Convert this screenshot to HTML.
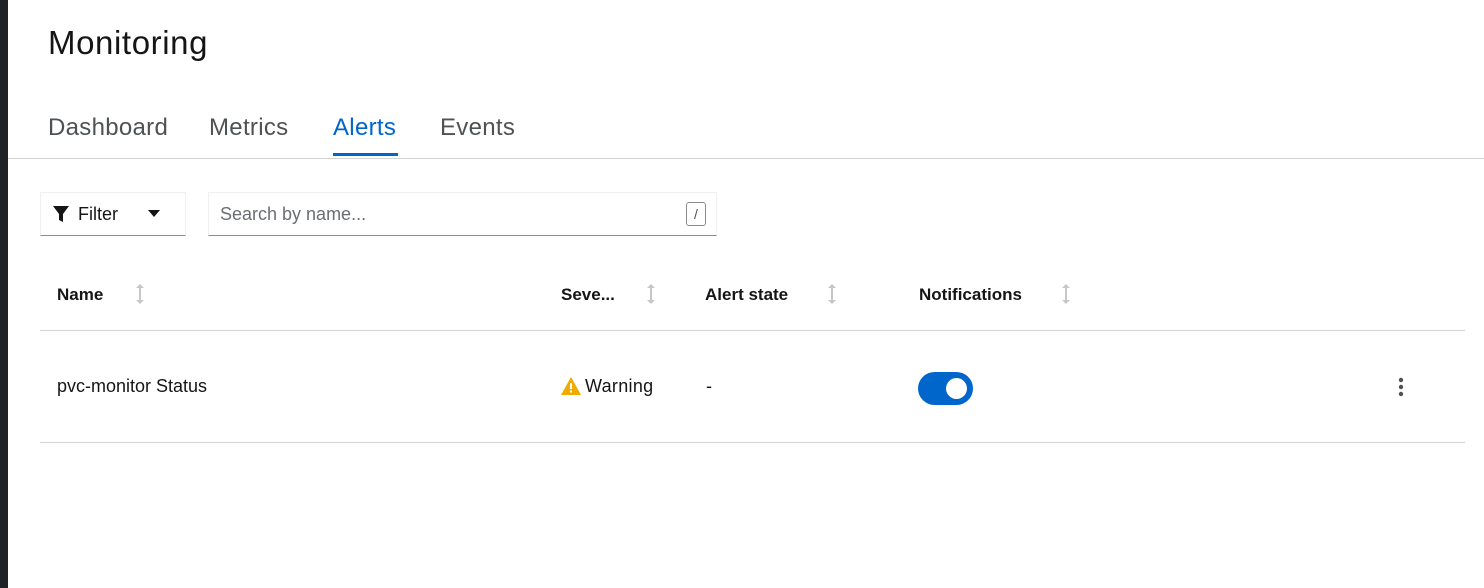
<!DOCTYPE html>
<html><head><style>
body{margin:0;width:1484px;height:588px;background:#fff;font-family:"Liberation Sans",sans-serif;color:#151515;position:relative;overflow:hidden}
.a{position:absolute}
.strip{left:0;top:0;width:8px;height:588px;background:#1f2227}
.tab{top:114px;font-size:24px;color:#4f5255;letter-spacing:0.3px}
.hd{font-weight:bold;font-size:17px;top:285px}
</style></head><body>
<div class="a strip"></div>
<div class="a" style="left:48px;top:24px;font-size:33px;letter-spacing:0.6px">Monitoring</div>
<div class="a tab" style="left:48px">Dashboard</div>
<div class="a tab" style="left:209px">Metrics</div>
<div class="a tab" style="left:333px;color:#0066cc">Alerts</div>
<div class="a" style="left:333px;top:153px;width:65px;height:3px;background:#0066cc"></div>
<div class="a tab" style="left:440px">Events</div>
<div class="a" style="left:8px;top:158px;width:1476px;height:1px;background:#d2d2d2"></div>

<div class="a" style="left:40px;top:192px;width:144px;height:42px;border:1px solid #f0f0f0;border-bottom:1px solid #8a8d90"></div>
<svg class="a" style="left:52px;top:205px" width="18" height="18" viewBox="0 0 18 18"><path d="M1 1H17L11 9V17L7 15V9Z" fill="#151515"/></svg>
<div class="a" style="left:78px;top:204px;font-size:18px">Filter</div>
<svg class="a" style="left:148px;top:210px" width="12" height="8"><path d="M0 0H12L6 7Z" fill="#151515"/></svg>
<div class="a" style="left:208px;top:192px;width:507px;height:42px;border:1px solid #f0f0f0;border-bottom:1px solid #8a8d90"></div>
<div class="a" style="left:220px;top:204px;font-size:18px;color:#6a6e73">Search by name...</div>
<div class="a" style="left:686px;top:202px;width:18px;height:22px;border:1px solid #8a8d90;border-radius:3px;font-size:14px;text-align:center;line-height:22px;color:#4f5255">/</div>

<svg width="0" height="0" style="position:absolute"><defs><symbol id="s" viewBox="0 0 10 22"><path d="M5 1L9 5H6V17H9L5 21L1 17H4V5H1Z" fill="#c7c7c7"/></symbol></defs></svg>
<div class="a hd" style="left:57px">Name</div><svg class="a" style="left:135px;top:283px" width="10" height="22"><use href="#s"/></svg>
<div class="a hd" style="left:561px">Seve...</div><svg class="a" style="left:646px;top:283px" width="10" height="22"><use href="#s"/></svg>
<div class="a hd" style="left:705px">Alert state</div><svg class="a" style="left:827px;top:283px" width="10" height="22"><use href="#s"/></svg>
<div class="a hd" style="left:919px">Notifications</div><svg class="a" style="left:1061px;top:283px" width="10" height="22"><use href="#s"/></svg>
<div class="a" style="left:40px;top:330px;width:1425px;height:1px;background:#d2d2d2"></div>

<div class="a" style="left:57px;top:376px;font-size:18px">pvc-monitor Status</div>
<svg class="a" style="left:561px;top:377px" width="20" height="18" viewBox="0 0 20 18"><path d="M10 0L20 18H0Z" fill="#f0ab00"/><rect x="9" y="6" width="2" height="6" fill="#fff"/><rect x="9" y="13.5" width="2" height="2" fill="#fff"/></svg>
<div class="a" style="left:585px;top:376px;font-size:18px;letter-spacing:0.3px">Warning</div>
<div class="a" style="left:706px;top:376px;font-size:18px">-</div>
<div class="a" style="left:918px;top:372px;width:55px;height:33px;border-radius:17px;background:#0066cc"></div>
<div class="a" style="left:946px;top:378px;width:21px;height:21px;border-radius:50%;background:#fff"></div>
<svg class="a" style="left:1398px;top:377px" width="6" height="20"><circle cx="3" cy="3" r="2.2" fill="#4f5255"/><circle cx="3" cy="10" r="2.2" fill="#4f5255"/><circle cx="3" cy="17" r="2.2" fill="#4f5255"/></svg>
<div class="a" style="left:40px;top:442px;width:1425px;height:1px;background:#d2d2d2"></div>
</body></html>
